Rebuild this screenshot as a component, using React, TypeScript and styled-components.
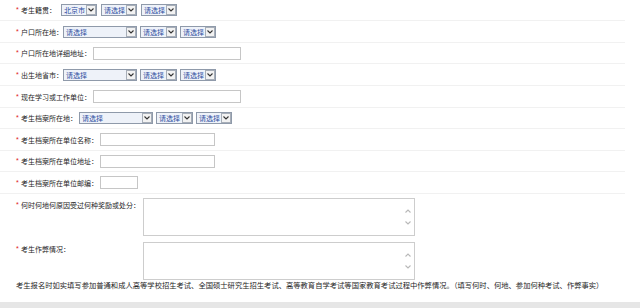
import React from "react";
import styled, { createGlobalStyle } from "styled-components";

const Global = createGlobalStyle`
  html, body { margin: 0; padding: 0; background: #ffffff; }
  body { font-family: "Noto Sans CJK SC", "Noto Sans", sans-serif; }
`;

const Page = styled.div`
  width: 640px;
  height: 308px;
  display: flex;
  flex-direction: column;
  overflow: hidden;
  background: #ffffff;
`;

const Form = styled.div`
  width: 625px;
  display: flex;
  flex-direction: column;
`;

const Row = styled.div<{ $h: number; $gap?: number }>`
  height: ${(p) => p.$h}px;
  box-sizing: border-box;
  display: flex;
  align-items: center;
  gap: ${(p) => (p.$gap ?? 2)}px;
  padding-left: 16px;
  border-bottom: 1px solid #f1f1f1;
`;

const TallRow = styled.div<{ $h: number; $pt: number }>`
  height: ${(p) => p.$h}px;
  box-sizing: border-box;
  display: flex;
  align-items: flex-start;
  gap: 2px;
  padding-left: 16px;
  padding-top: ${(p) => p.$pt}px;
`;

const Label = styled.span<{ $w?: number }>`
  display: inline-flex;
  align-items: center;
  font-size: 7px;
  line-height: 10px;
  color: #262626;
  white-space: nowrap;
  ${(p) => (p.$w ? `width: ${p.$w}px; margin-top: 2px;` : "")}
`;

const Star = styled.span`
  width: 5px;
  color: #e02020;
  font-size: 7px;
  line-height: 10px;
  font-family: "Liberation Sans", sans-serif;
`;

const Controls = styled.div<{ $gap: number }>`
  display: flex;
  align-items: center;
  gap: ${(p) => p.$gap}px;
`;

const SelectBox = styled.span<{ $w: number }>`
  display: inline-flex;
  align-items: stretch;
  width: ${(p) => p.$w}px;
  height: 12px;
  box-sizing: border-box;
  border: 1px solid #8f9aaa;
  background: #ffffff;
`;

const SelectText = styled.span`
  flex: 1;
  display: flex;
  align-items: center;
  padding-left: 2px;
  font-size: 7px;
  line-height: 10px;
  color: #2c4c9e;
  background: #eef2f9;
  white-space: nowrap;
  overflow: hidden;
`;

const ArrowBtn = styled.span`
  width: 10px;
  box-sizing: border-box;
  border: 1px solid #a7aeb8;
  background: #f2f2f2;
  display: flex;
  align-items: center;
  justify-content: center;
`;

const TextInput = styled.span<{ $w: number }>`
  display: inline-block;
  width: ${(p) => p.$w}px;
  height: 13px;
  box-sizing: border-box;
  border: 1px solid #c6c6c6;
  background: #ffffff;
`;

const TextArea = styled.div`
  width: 272px;
  height: 38px;
  box-sizing: border-box;
  border: 1px solid #cdcdcd;
  background: #ffffff;
  display: flex;
  justify-content: flex-end;
`;

const ScrollCol = styled.div`
  width: 13px;
  display: flex;
  flex-direction: column;
  align-items: center;
  gap: 8px;
  padding-top: 10px;
`;

const Note = styled.div`
  padding-left: 16px;
  font-size: 7.3px;
  line-height: 10px;
  color: #262626;
  white-space: nowrap;
`;

const Spacer = styled.div`
  flex: 1;
`;

const Footer = styled.div`
  height: 6px;
  background: #e6e6e6;
`;

const Chevron = ({ up, color }: { up?: boolean; color: string }) => (
  <svg width="6" height="4" viewBox="0 0 6 4">
    <polyline
      points={up ? "0.5,3.5 3,1 5.5,3.5" : "0.5,0.5 3,3 5.5,0.5"}
      fill="none"
      stroke={color}
      strokeWidth="1.1"
    />
  </svg>
);

const Select = ({ w, text }: { w: number; text: string }) => (
  <SelectBox $w={w}>
    <SelectText>{text}</SelectText>
    <ArrowBtn>
      <Chevron color="#333" />
    </ArrowBtn>
  </SelectBox>
);

const Area = () => (
  <TextArea>
    <ScrollCol>
      <Chevron up color="#b8b8b8" />
      <Chevron color="#b8b8b8" />
    </ScrollCol>
  </TextArea>
);

const FieldLabel = ({ text, w }: { text: string; w?: number }) => (
  <Label $w={w}>
    <Star>*</Star>
    {text}
  </Label>
);

export default function App() {
  return (
    <Page>
      <Global />
      <Form>
        <Row $h={21} $gap={5}>
          <FieldLabel text="考生籍贯：" />
          <Controls $gap={4}>
            <Select w={36} text="北京市" />
            <Select w={36} text="请选择" />
            <Select w={36} text="请选择" />
          </Controls>
        </Row>
        <Row $h={22} $gap={0}>
          <FieldLabel text="户口所在地：" />
          <Controls $gap={3}>
            <Select w={74} text="请选择" />
            <Select w={37} text="请选择" />
            <Select w={36} text="请选择" />
          </Controls>
        </Row>
        <Row $h={21}>
          <FieldLabel text="户口所在地详细地址：" />
          <TextInput $w={148} />
        </Row>
        <Row $h={22} $gap={0}>
          <FieldLabel text="出生地省市：" />
          <Controls $gap={3}>
            <Select w={74} text="请选择" />
            <Select w={37} text="请选择" />
            <Select w={36} text="请选择" />
          </Controls>
        </Row>
        <Row $h={22}>
          <FieldLabel text="现在学习或工作单位：" />
          <TextInput $w={148} />
        </Row>
        <Row $h={21}>
          <FieldLabel text="考生档案所在地：" />
          <Controls $gap={3}>
            <Select w={74} text="请选择" />
            <Select w={37} text="请选择" />
            <Select w={36} text="请选择" />
          </Controls>
        </Row>
        <Row $h={22}>
          <FieldLabel text="考生档案所在单位名称：" />
          <TextInput $w={115} />
        </Row>
        <Row $h={21}>
          <FieldLabel text="考生档案所在单位地址：" />
          <TextInput $w={115} />
        </Row>
        <Row $h={22}>
          <FieldLabel text="考生档案所在单位邮编：" />
          <TextInput $w={38} />
        </Row>
        <TallRow $h={45} $pt={4}>
          <FieldLabel text="何时何地何原因受过何种奖励或处分：" w={125} />
          <Area />
        </TallRow>
        <TallRow $h={41} $pt={3}>
          <FieldLabel text="考生作弊情况：" w={125} />
          <Area />
        </TallRow>
        <Note>
          考生报名时如实填写参加普通和成人高等学校招生考试、全国硕士研究生招生考试、高等教育自学考试等国家教育考试过程中作弊情况。（填写何时、何地、参加何种考试、作弊事实）
        </Note>
      </Form>
      <Spacer />
      <Footer />
    </Page>
  );
}
